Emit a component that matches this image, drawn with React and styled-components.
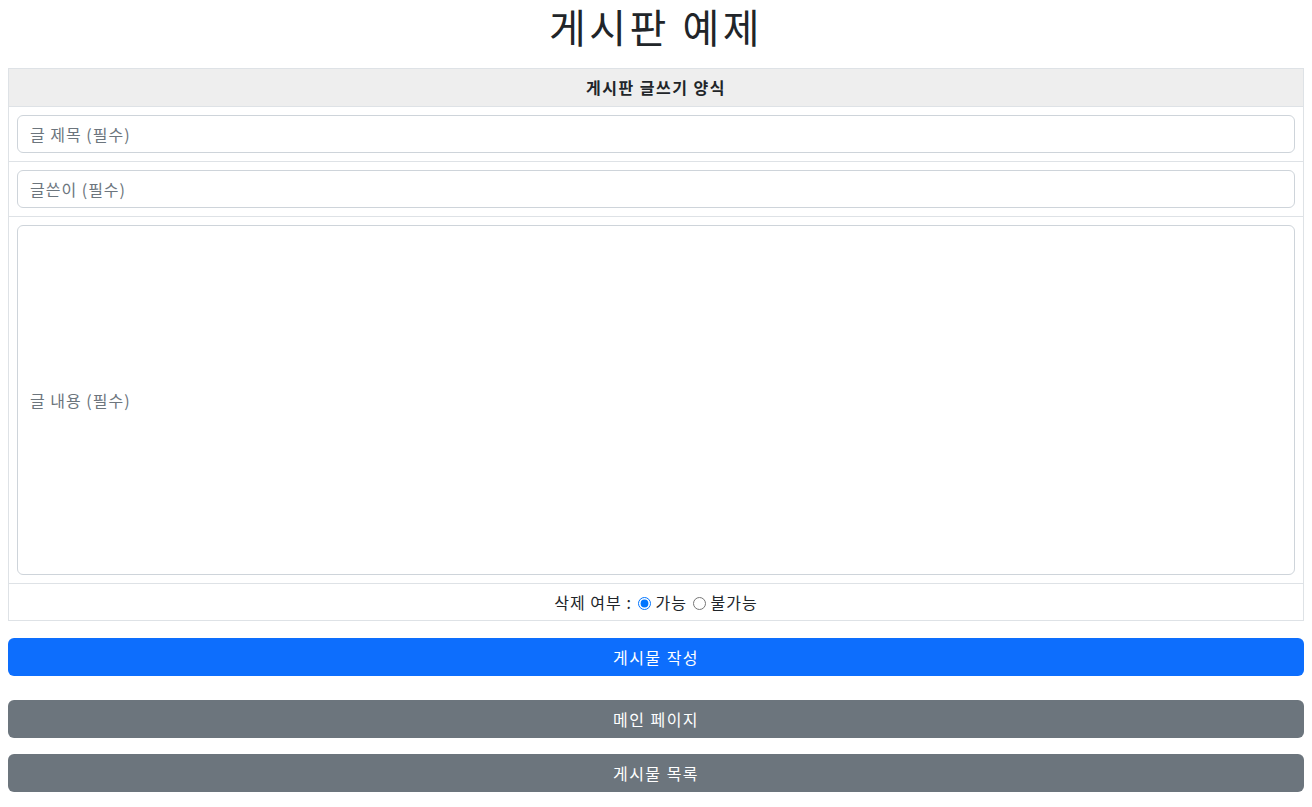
import styled, { createGlobalStyle } from "styled-components";

const Global = createGlobalStyle`
  body {
    margin: 0;
    font-family: "Noto Sans CJK KR", "Noto Sans", sans-serif;
    color: #212529;
    background: #fff;
    letter-spacing: 1px;
  }
  * { box-sizing: border-box; }
`;

const Page = styled.div`
  padding: 2px 8px 14px;
`;

const Title = styled.h1`
  margin: 0 0 18px;
  font-size: 40px;
  font-weight: 400;
  line-height: 48px;
  letter-spacing: 3.5px;
  text-align: center;
`;

const Board = styled.table`
  width: 100%;
  border-collapse: collapse;
  border: 1px solid #dee2e6;
`;

const Head = styled.th`
  background: #eeeeee;
  border: 1px solid #dee2e6;
  padding: 8px;
  font-size: 16px;
  font-weight: 700;
  line-height: 21px;
  letter-spacing: 1.5px;
  text-align: center;
`;

const Cell = styled.td`
  border: 1px solid #dee2e6;
  padding: 8px;
  text-align: ${(p) => (p.$center ? "center" : "left")};
  font-size: 16px;
  line-height: 20px;
`;

const Field = styled.input`
  display: block;
  width: 100%;
  height: ${(p) => p.$h || 38}px;
  padding: 6px 12px;
  font: inherit;
  font-size: 16px;
  letter-spacing: 1px;
  color: #212529;
  border: 1px solid #ced4da;
  border-radius: 6px;
  outline: none;
  &::placeholder { color: #6c757d; }
`;

const Radio = styled.input`
  margin: 0 4px 0 2px;
  vertical-align: -1px;
`;

const Button = styled.button`
  display: block;
  width: 100%;
  height: 38px;
  margin-top: ${(p) => p.$gap}px;
  border: 0;
  border-radius: 6px;
  background: ${(p) => (p.$primary ? "#0d6efd" : "#6c757d")};
  color: #fff;
  font: inherit;
  font-size: 16px;
  letter-spacing: 1.5px;
  cursor: pointer;
`;

export default function App() {
  return (
    <Page>
      <Global />
      <Title>게시판 예제</Title>
      <Board>
        <thead>
          <tr>
            <Head>게시판 글쓰기 양식</Head>
          </tr>
        </thead>
        <tbody>
          <tr>
            <Cell><Field placeholder="글 제목 (필수)" /></Cell>
          </tr>
          <tr>
            <Cell><Field placeholder="글쓴이 (필수)" /></Cell>
          </tr>
          <tr>
            <Cell><Field $h={350} placeholder="글 내용 (필수)" /></Cell>
          </tr>
          <tr>
            <Cell $center>
              삭제 여부 : <Radio type="radio" name="del" defaultChecked />가능{" "}
              <Radio type="radio" name="del" />불가능
            </Cell>
          </tr>
        </tbody>
      </Board>
      <Button $primary $gap={17}>게시물 작성</Button>
      <Button $gap={24}>메인 페이지</Button>
      <Button $gap={16}>게시물 목록</Button>
    </Page>
  );
}
